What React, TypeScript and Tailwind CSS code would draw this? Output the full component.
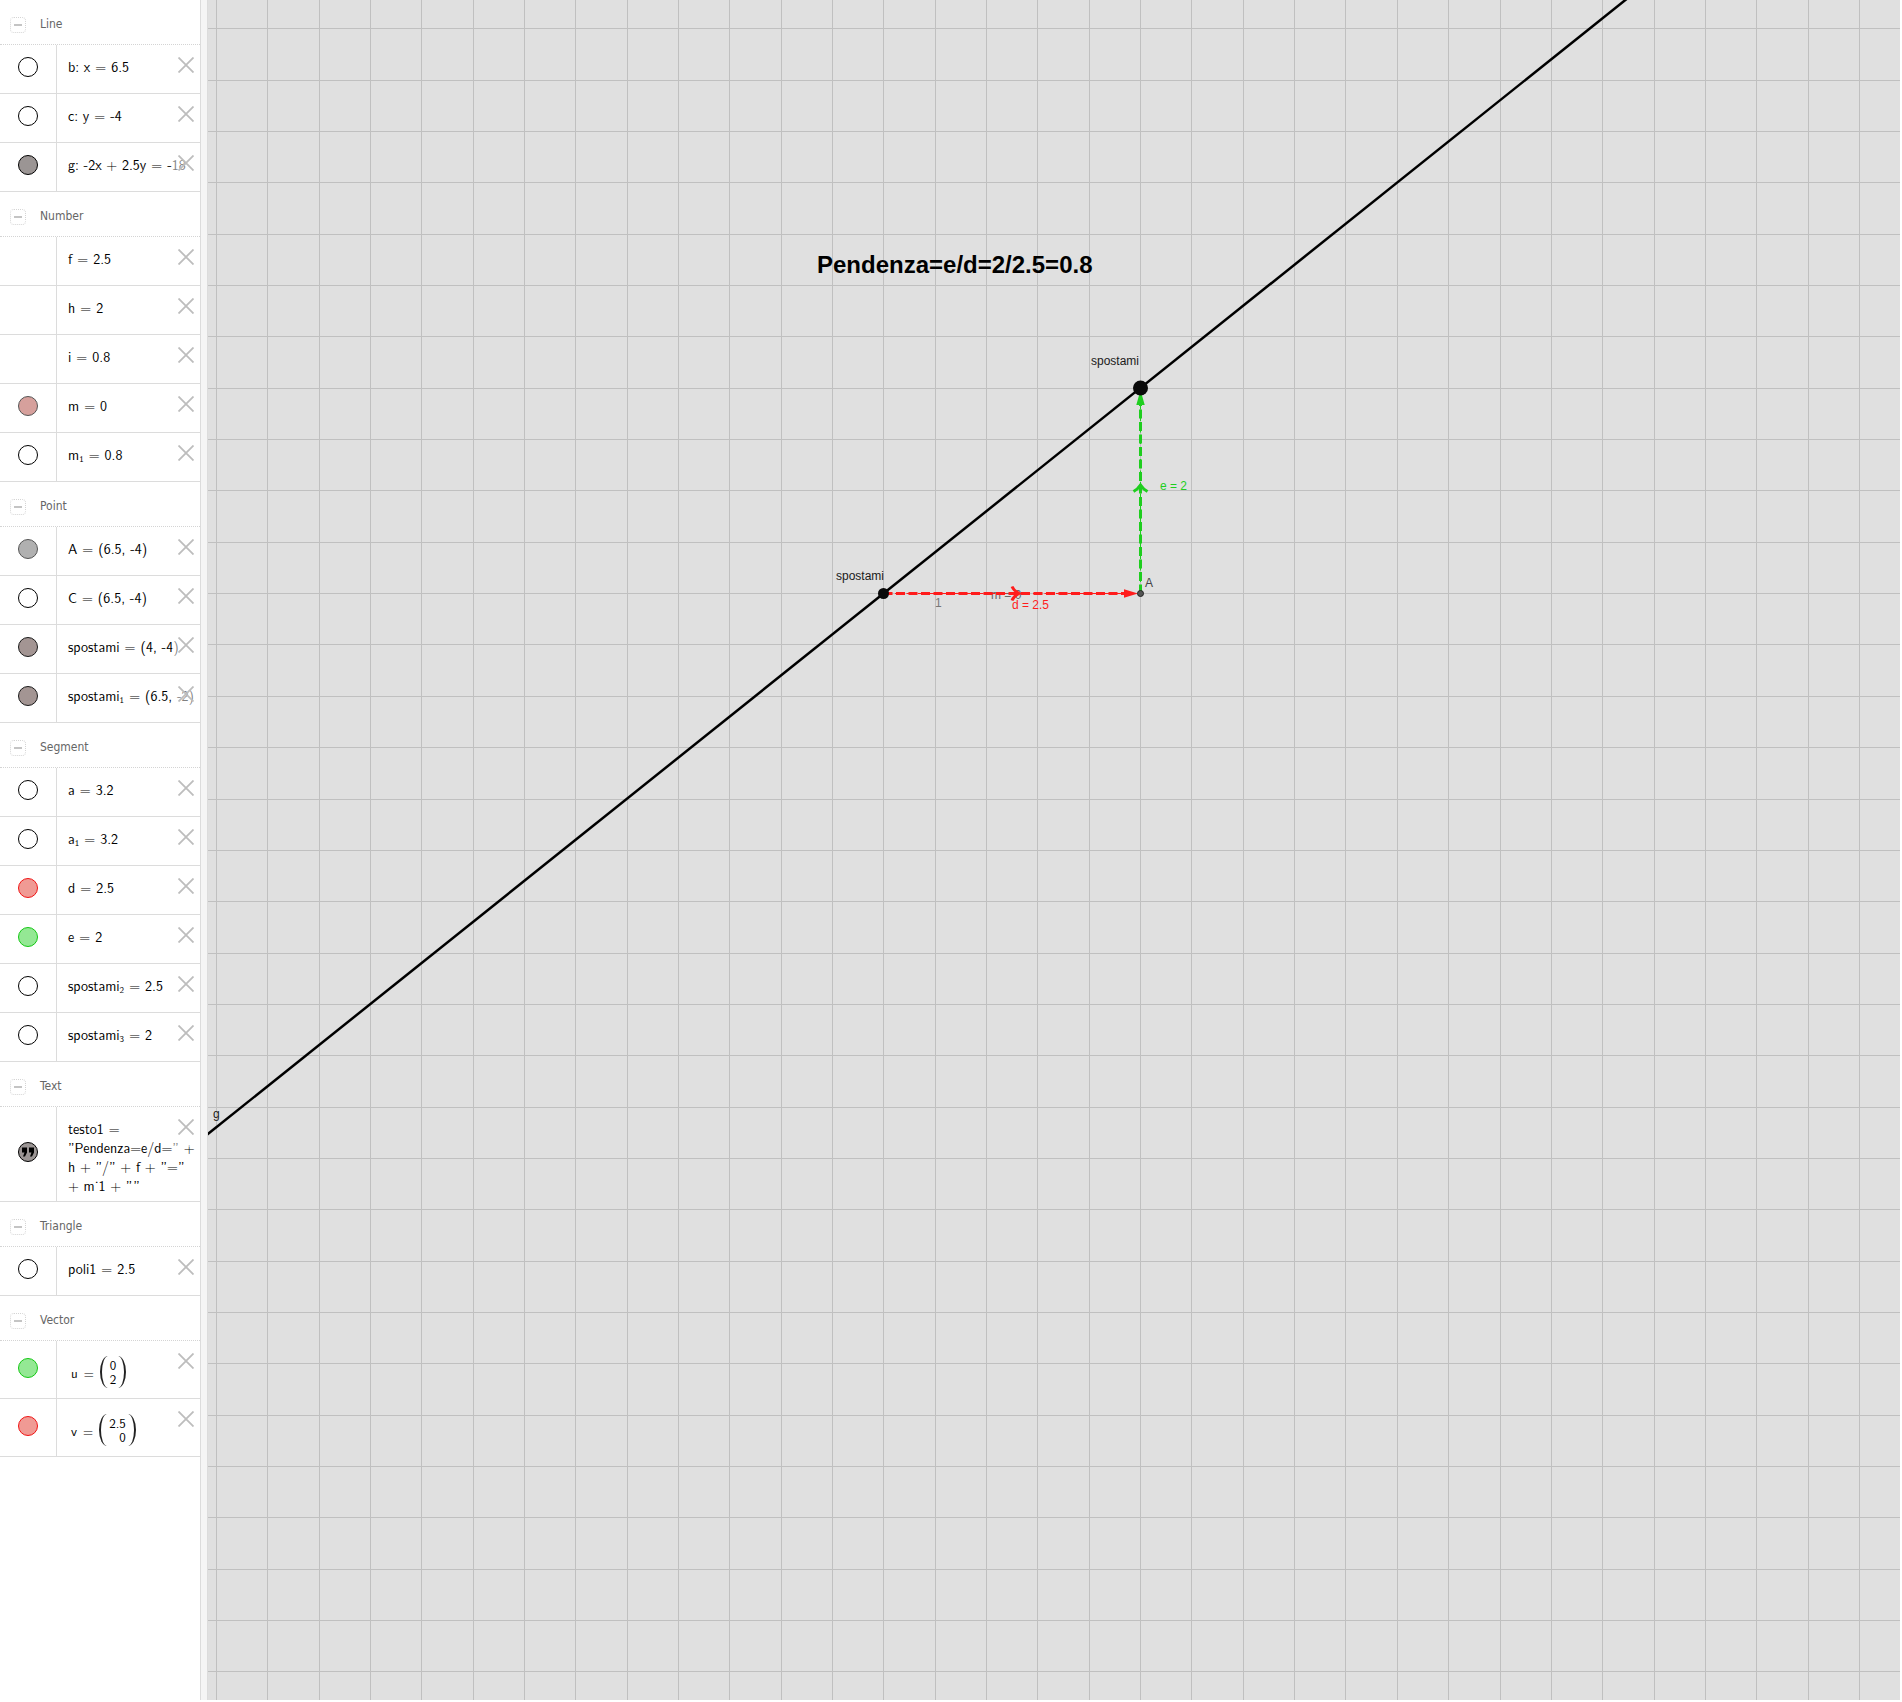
import type { ReactNode } from "react";

type Item = {
  id: string;
  label: ReactNode;
  marble?: string;
  quote?: boolean;
  tall?: boolean;
};

const HIDDEN = "border-black bg-white";
const DARK = "border-black bg-[#9b9594]";
const MOVABLE = "border-[#1a1a1a] bg-[#a39593]";
const RED = "border-[#f01414] bg-[#f09a94]";
const GREEN = "border-[#14c814] bg-[#94e894]";

const Eq = () => <span className="mx-[5px]">=</span>;

const Sub = ({ children }: { children: ReactNode }) => (
  <sub className="text-[9px]">{children}</sub>
);

const Matrix = ({ name, rows }: { name: string; rows: string[] }) => (
  <span className="flex items-center pl-[3px] pt-[3px]">
    <span className="text-[13px]">{name}</span>
    <span className="mx-1.5 text-[13px]">=</span>
    <span className="-mr-1.5 h-8 w-4 rounded-[50%] border-l-2 border-[#222]" />
    <span className="flex flex-col text-right text-[13px] leading-[14px]">
      {rows.map((row, i) => (
        <span key={i}>{row}</span>
      ))}
    </span>
    <span className="-ml-1.5 h-8 w-4 rounded-[50%] border-r-2 border-[#222]" />
  </span>
);

const groups: { title: string; items: Item[] }[] = [
  {
    title: "Line",
    items: [
      { id: "b", label: <>b: x<Eq />6.5</>, marble: HIDDEN },
      { id: "c", label: <>c: y<Eq />-4</>, marble: HIDDEN },
      { id: "g", label: <>g: -2x + 2.5y<Eq />-18</>, marble: DARK },
    ],
  },
  {
    title: "Number",
    items: [
      { id: "f", label: <>f<Eq />2.5</> },
      { id: "h", label: <>h<Eq />2</> },
      { id: "i", label: <>i<Eq />0.8</> },
      { id: "m", label: <>m<Eq />0</>, marble: "border-[#555] bg-[#d6a09c]" },
      { id: "m1", label: <>m<Sub>1</Sub><Eq />0.8</>, marble: HIDDEN },
    ],
  },
  {
    title: "Point",
    items: [
      { id: "A", label: <>A<Eq />(6.5, -4)</>, marble: "border-[#555] bg-[#b0b0b0]" },
      { id: "C", label: <>C<Eq />(6.5, -4)</>, marble: HIDDEN },
      { id: "spostami", label: <>spostami<Eq />(4, -4)</>, marble: MOVABLE },
      { id: "spostami1", label: <>spostami<Sub>1</Sub><Eq />(6.5, -2)</>, marble: MOVABLE },
    ],
  },
  {
    title: "Segment",
    items: [
      { id: "a", label: <>a<Eq />3.2</>, marble: HIDDEN },
      { id: "a1", label: <>a<Sub>1</Sub><Eq />3.2</>, marble: HIDDEN },
      { id: "d", label: <>d<Eq />2.5</>, marble: RED },
      { id: "e", label: <>e<Eq />2</>, marble: GREEN },
      { id: "spostami2", label: <>spostami<Sub>2</Sub><Eq />2.5</>, marble: HIDDEN },
      { id: "spostami3", label: <>spostami<Sub>3</Sub><Eq />2</>, marble: HIDDEN },
    ],
  },
  {
    title: "Text",
    items: [
      {
        id: "testo1",
        label: (
          <>
            testo1<Eq />
            <br />
            ”Pendenza=e/d=” +
            <br />
            h + ”/” + f + ”=”
            <br />
            + m˙1 + ””
          </>
        ),
        marble: DARK,
        quote: true,
      },
    ],
  },
  {
    title: "Triangle",
    items: [{ id: "poli1", label: <>poli1<Eq />2.5</>, marble: HIDDEN }],
  },
  {
    title: "Vector",
    items: [
      { id: "u", label: <Matrix name="u" rows={["0", "2"]} />, marble: GREEN, tall: true },
      { id: "v", label: <Matrix name="v" rows={["2.5", "0"]} />, marble: RED, tall: true },
    ],
  },
];

const QuoteIcon = () => (
  <svg viewBox="0 0 14 10" className="h-2.5 w-3.5" fill="#000">
    <path d="M1 0.5h5v5L4 9.5H2L3.5 5.5H1zM8 0.5h5v5L11 9.5H9L10.5 5.5H8z" />
  </svg>
);

const Row = ({ item }: { item: Item }) => (
  <li className="flex border-b border-[#dcdcdc]">
    <div className="flex w-14 shrink-0 items-center justify-center pb-1">
      {item.marble && (
        <button
          type="button"
          aria-label={`Show or hide ${item.id}`}
          className={`flex size-5 items-center justify-center rounded-full border ${item.marble}`}
        >
          {item.quote && <QuoteIcon />}
        </button>
      )}
    </div>
    <div
      className={`relative min-w-0 flex-1 overflow-hidden whitespace-nowrap border-l border-[#dcdcdc] pl-[11px] text-[14px] leading-[19px] text-black ${
        item.tall ? "h-[57px] pt-3" : "min-h-12 pt-3 pb-1.5"
      }`}
    >
      {item.label}
      <button
        type="button"
        aria-label={`Delete ${item.id}`}
        className="absolute top-0 right-0 flex h-10 w-7 items-center justify-center bg-white/50"
      >
        <svg viewBox="0 0 16 16" className="size-4" stroke="#bdbdbd" strokeWidth="1.8">
          <path d="M0.5 0.5l15 15M15.5 0.5l-15 15" />
        </svg>
      </button>
    </div>
  </li>
);

const AlgebraView = () => (
  <aside className="w-[201px] shrink-0 border-r border-[#dcdcdc] bg-white font-['Latin_Modern_Sans','DejaVu_Sans_Condensed',sans-serif]">
    {groups.map((group) => (
      <section key={group.title}>
        <div className="flex h-[45px] items-center border-b border-dotted border-[#d4d4d4] pl-2.5">
          <button
            type="button"
            aria-label={`Collapse ${group.title}`}
            className="mt-1.5 flex size-4 items-center justify-center rounded border border-dotted border-[#d4d4d4]"
          >
            <span className="h-0.5 w-2 bg-[#c4c4c4]" />
          </button>
          <h2 className="ml-3.5 pt-1 font-['DejaVu_Sans_Condensed',sans-serif] text-[12px] leading-4 text-[#666]">
            {group.title}
          </h2>
        </div>
        <ul>
          {group.items.map((item) => (
            <Row key={item.id} item={item} />
          ))}
        </ul>
      </section>
    ))}
  </aside>
);

// Grid spacing and the first visible grid line on each axis
const STEP = 51.34;
const GRID_X = 8;
const GRID_Y = 28.4;
const lines = Array.from({ length: 60 }, (_, i) => i);

const GraphicsView = () => (
  <svg className="min-w-0 flex-1 bg-[#e0e0e0] font-['Liberation_Sans',Arial,sans-serif] text-[12px]">
    <g fill="#c0c0c0">
      {lines.map((i) => (
        <rect key={`v${i}`} x={Math.round(GRID_X + i * STEP)} y="0" width="1" height="100%" />
      ))}
      {lines.map((i) => (
        <rect key={`h${i}`} x="0" y={Math.round(GRID_Y + i * STEP)} width="100%" height="1" />
      ))}
    </g>

    {/* slope triangle label */}
    <text x="727" y="607" fill="#777">1</text>
    <text x="783" y="599" fill="#666">m = 0</text>

    {/* line g */}
    <path d="M-8 1140.3L1433.4 -12.8" stroke="#000" strokeWidth="2.5" />

    {/* d and v */}
    <g stroke="#ff1c1c" strokeWidth="3" fill="none">
      <path d="M675.5 593.5H918" strokeDasharray="9 3.5" />
      <path d="M675.5 593.5H918" strokeWidth="1" strokeDasharray="8 3.5" />
      <path d="M804 586.5Q806 591 811 593.5Q806 596 804 600.5" />
    </g>
    <path d="M916 589.3L930 593.5L916 597.7z" fill="#ff1c1c" />

    {/* e and u */}
    <g stroke="#1fce1f" strokeWidth="3" fill="none">
      <path d="M932.5 593.5V404" strokeDasharray="9 3.5" />
      <path d="M932.5 593.5V404" strokeWidth="1" strokeDasharray="8 3.5" />
      <path d="M925.5 491.5Q930 489 932.5 485Q935 489 939.5 491.5" />
    </g>
    <path d="M928.3 405L932.5 390L936.7 405z" fill="#1fce1f" />

    {/* points */}
    <circle cx="675.5" cy="593.5" r="5.5" fill="#0a0a0a" />
    <circle cx="932.5" cy="388" r="7.5" fill="#0a0a0a" />
    <circle cx="932.5" cy="593.5" r="3" fill="#555" stroke="#222" />

    <text x="628" y="580" fill="#1a1a1a">spostami</text>
    <text x="883" y="365" fill="#1a1a1a">spostami</text>
    <text x="937" y="587" fill="#444">A</text>
    <text x="804" y="609" fill="#ff1c1c">d = 2.5</text>
    <text x="952" y="490" fill="#1fce1f">e = 2</text>
    <text x="5" y="1118" fill="#1a1a1a">g</text>
    <text x="609" y="273" fill="#000" className="text-[24px] font-bold">
      Pendenza=e/d=2/2.5=0.8
    </text>
  </svg>
);

const App = () => (
  <main className="flex min-h-screen bg-white pr-0.5 pb-0.5">
    <AlgebraView />
    <div className="w-[7px] shrink-0 border-r border-[#dcdcdc] bg-[#f5f5f5]" />
    <GraphicsView />
  </main>
);

export default App;
